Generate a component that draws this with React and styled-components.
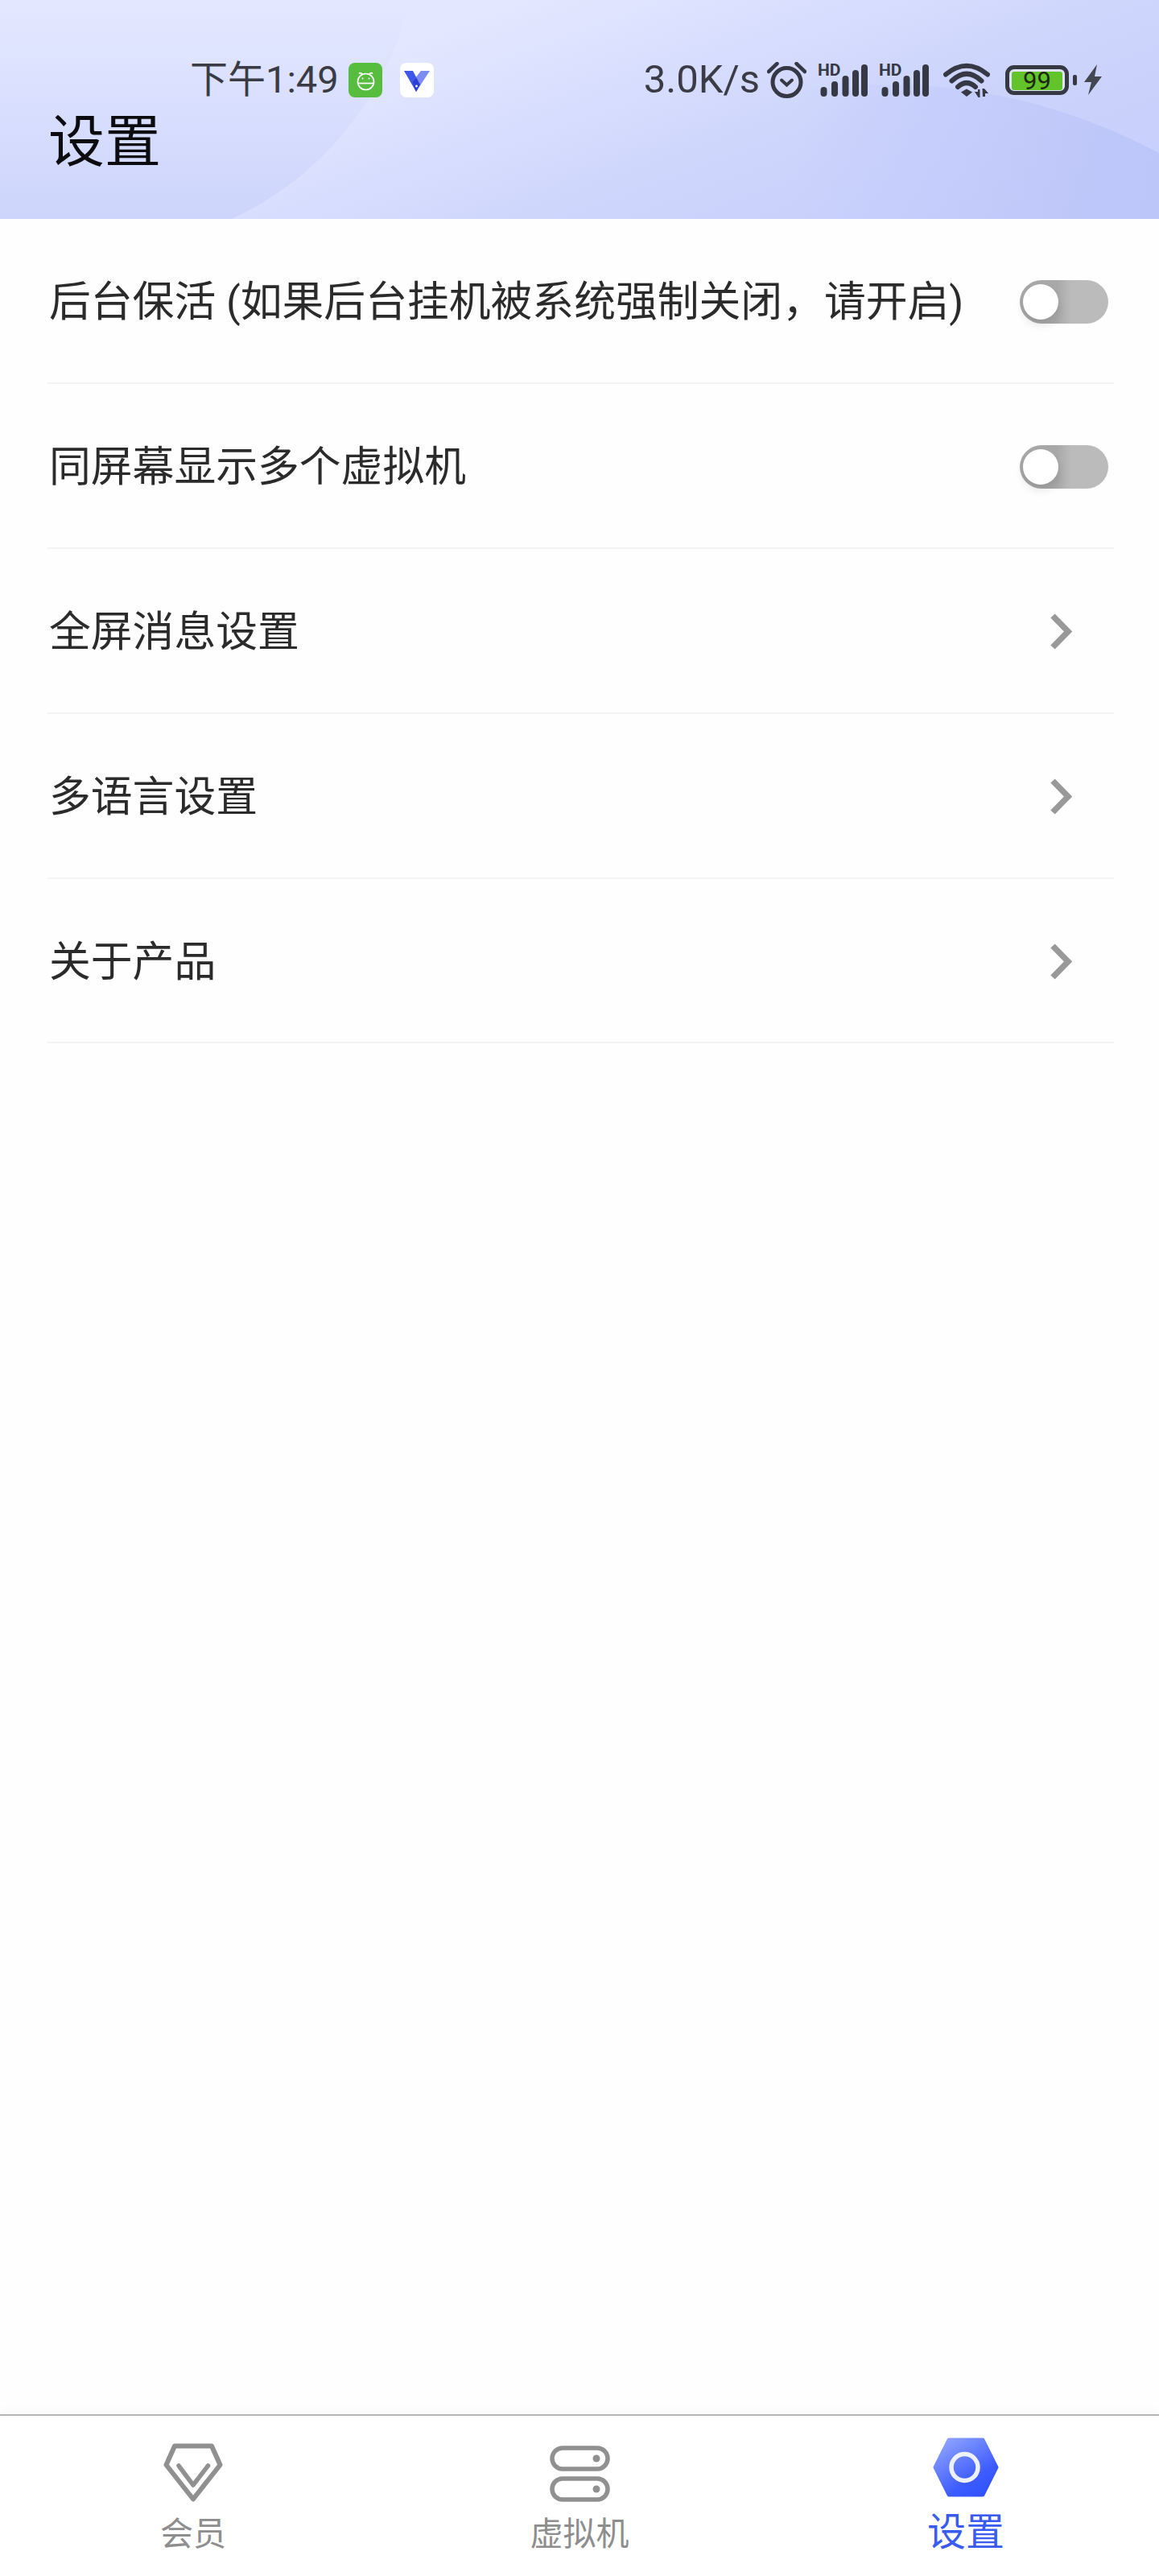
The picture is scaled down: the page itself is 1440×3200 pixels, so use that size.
import React from "react";
import styled, { createGlobalStyle } from "styled-components";

const GlobalStyle = createGlobalStyle`
  html, body { margin: 0; padding: 0; background: #fff; }
  * { box-sizing: border-box; }
  body { font-family: Roboto, "Noto Sans CJK SC", sans-serif; }
`;

const settings = [
  { label: "后台保活 (如果后台挂机被系统强制关闭，请开启)", kind: "toggle" },
  { label: "同屏幕显示多个虚拟机", kind: "toggle" },
  { label: "全屏消息设置", kind: "link" },
  { label: "多语言设置", kind: "link" },
  { label: "关于产品", kind: "link" },
];

const bars = [
  { x: 7.5, top: 33 },
  { x: 21, top: 26 },
  { x: 34.5, top: 19 },
  { x: 47, top: 12 },
  { x: 58, top: 5 },
];

function Signal() {
  return (
    <SignalBox>
      <HdMark>HD</HdMark>
      <svg width="62" height="41" viewBox="0 0 62 41">
        {bars.map((b) => (
          <line
            key={b.x}
            x1={b.x}
            x2={b.x}
            y1={b.top}
            y2="37"
            stroke="#363844"
            strokeWidth="8"
            strokeLinecap="round"
          />
        ))}
      </svg>
    </SignalBox>
  );
}

function Alarm() {
  return (
    <svg width="49" height="45" viewBox="0 0 49 45" fill="none" stroke="#363844" strokeLinecap="round">
      <circle cx="24.5" cy="25" r="17.5" strokeWidth="5" />
      <path d="M18 22.5l6.5 6 6.5-6" strokeWidth="4" />
      <path d="M2 12L12.5 2M36.5 2L47 12" strokeWidth="4.5" />
    </svg>
  );
}

function Wifi() {
  return (
    <svg width="58" height="44" viewBox="0 0 58 44" fill="none" stroke="#363844" strokeLinecap="round">
      <path d="M3 15.5Q29-6 55 15.5" strokeWidth="6" />
      <path d="M10.5 23.5Q29 6 47.5 23.5" strokeWidth="6" />
      <path d="M18 31Q29 21 40 31" strokeWidth="6" />
      <path d="M22 37.5L29 33.5L36 37.5L29 43Z" fill="#363844" stroke="none" />
      <path d="M39 37h4v-3h2.500v10h-2z" fill="#363844" stroke="none" />
      <path d="M48.500 33h2.500l5 6h-4v4h-3z" fill="#363844" stroke="none" />
    </svg>
  );
}

function Bolt() {
  return (
    <svg width="22" height="38" viewBox="0 0 22 38">
      <path d="M16 0L0 22h9L5 38 22 15h-9z" fill="#444650" />
    </svg>
  );
}

function RobotBadge() {
  return (
    <svg width="27" height="27" viewBox="0 0 27 27" fill="none" stroke="#fff" strokeWidth="1.7">
      <ellipse cx="13.5" cy="15.5" rx="10" ry="10" />
      <path d="M5 5.500a2.500 2.500 0 0 1 4 .5M22 5.500a2.500 2.500 0 0 0-4 .5" />
      <path d="M4 17.500h19" />
      <circle cx="9.500" cy="11.500" r="1" fill="#fff" stroke="none" />
      <circle cx="17.500" cy="11.500" r="1" fill="#fff" stroke="none" />
    </svg>
  );
}

function VBadge() {
  return (
    <svg width="42" height="43" viewBox="0 0 42 43">
      <path d="M5 10h11l9 17-5 9z" fill="#3f57e6" />
      <path d="M37 10H26L15 24l5 12z" fill="#7c8cf3" />
      <path d="M15 24l5-6 5 9-5 9z" fill="#2a3ed2" />
      <circle cx="20.500" cy="29" r="1.400" fill="#fff" />
    </svg>
  );
}

function Chevron() {
  return (
    <svg width="28" height="47" viewBox="0 0 28 47" fill="none">
      <path d="M4 4l19 19.500L4 43" stroke="#999999" strokeWidth="7.500" />
    </svg>
  );
}

function Diamond() {
  return (
    <svg width="74" height="73" viewBox="0 0 74 73" fill="none" stroke="#909090" strokeLinejoin="round" strokeLinecap="round">
      <path d="M14 3.500H60L70.500 27L37 69.500L3.500 27Z" strokeWidth="6" />
      <path d="M19 28L37 52L55.500 28" strokeWidth="5.500" />
    </svg>
  );
}

function Server() {
  return (
    <svg width="75" height="70" viewBox="0 0 75 70" fill="none" stroke="#909090">
      <rect x="3" y="3" width="69" height="26" rx="13" strokeWidth="5.500" />
      <rect x="3" y="41" width="69" height="26" rx="13" strokeWidth="5.500" />
      <circle cx="58" cy="16" r="4.500" fill="#909090" stroke="none" />
      <circle cx="58" cy="54" r="4.500" fill="#909090" stroke="none" />
    </svg>
  );
}

function Hex() {
  return (
    <svg width="82" height="74" viewBox="0 0 82 74">
      <defs>
        <linearGradient id="hexFill" x1="0.150" y1="0" x2="0.850" y2="1">
          <stop offset="0" stopColor="#8ea2ff" />
          <stop offset="0.700" stopColor="#3d5cff" />
          <stop offset="1" stopColor="#3050ff" />
        </linearGradient>
      </defs>
      <path
        d="M20 3H62L79 37L62 71H20L3 37Z"
        fill="url(#hexFill)"
        stroke="url(#hexFill)"
        strokeWidth="5"
        strokeLinejoin="round"
      />
      <circle cx="39.500" cy="37" r="16.500" fill="none" stroke="#eef1ff" strokeWidth="5.500" />
    </svg>
  );
}

function Toggle() {
  return (
    <Track>
      <Knob />
    </Track>
  );
}

const tabs = [
  { label: "会员", icon: <Diamond /> },
  { label: "虚拟机", icon: <Server /> },
  { label: "设置", icon: <Hex />, active: true },
];

export default function App() {
  return (
    <Page>
      <GlobalStyle />
      <Header>
        <StatusBar>
          <StatusLeft>
            <Clock>下午1:49</Clock>
            <GreenBadge>
              <RobotBadge />
            </GreenBadge>
            <WhiteBadge>
              <VBadge />
            </WhiteBadge>
          </StatusLeft>
          <StatusRight>
            <Speed>3.0K/s</Speed>
            <Alarm />
            <Signal />
            <Signal />
            <WifiSlot>
              <Wifi />
            </WifiSlot>
            <Battery>
              <BatteryFill>99</BatteryFill>
              <BatteryNub />
            </Battery>
            <Bolt />
          </StatusRight>
        </StatusBar>
        <Title>设置</Title>
      </Header>
      <List>
        {settings.map((item) => (
          <Row key={item.label}>
            <RowLabel>{item.label}</RowLabel>
            {item.kind === "toggle" ? (
              <Toggle />
            ) : (
              <ChevronSlot>
                <Chevron />
              </ChevronSlot>
            )}
          </Row>
        ))}
      </List>
      <TabBar>
        {tabs.map((tab) => (
          <Tab key={tab.label}>
            {tab.icon}
            <TabLabel $active={tab.active}>{tab.label}</TabLabel>
          </Tab>
        ))}
      </TabBar>
    </Page>
  );
}

const Page = styled.div`
  display: flex;
  flex-direction: column;
  width: 1440px;
  height: 3200px;
  background: #fefefe;
  overflow: hidden;
`;

const Header = styled.header`
  position: relative;
  height: 272px;
  padding-top: 76px;
  overflow: hidden;
  background: linear-gradient(160deg, #e3e7ff 30%, #cdd5fc 66%, #c5cdfb 100%);

  &::before {
    content: "";
    position: absolute;
    left: -280px;
    top: -491px;
    width: 800px;
    height: 800px;
    border-radius: 50%;
    background: linear-gradient(180deg, #e3e7ff 63%, #c9d2fb 100%);
  }

  &::after {
    content: "";
    position: absolute;
    left: 390px;
    top: 105px;
    width: 1424px;
    height: 1424px;
    border-radius: 50%;
    background: linear-gradient(90deg, rgba(188, 197, 248, 0) 42%, #bcc5f9 76%);
  }
`;

const StatusBar = styled.div`
  position: relative;
  z-index: 1;
  display: flex;
  align-items: center;
  justify-content: space-between;
  height: 46px;
  padding: 0 71px 0 236px;
`;

const StatusLeft = styled.div`
  display: flex;
  align-items: center;
`;

const Clock = styled.span`
  width: 197px;
  font-size: 47px;
  line-height: 46px;
  color: #3a3b45;
  white-space: nowrap;
`;

const GreenBadge = styled.div`
  display: flex;
  align-items: center;
  justify-content: center;
  width: 42px;
  height: 43px;
  border-radius: 8px;
  background: #56bd3f;
`;

const WhiteBadge = styled.div`
  width: 42px;
  height: 43px;
  margin-left: 22px;
  border-radius: 8px;
  background: #fff;
`;

const StatusRight = styled.div`
  display: flex;
  align-items: center;
  gap: 14px;
`;

const Speed = styled.span`
  font-size: 49px;
  line-height: 46px;
  color: #3a3b45;
  margin-right: -5px;
  white-space: nowrap;
`;

const SignalBox = styled.div`
  position: relative;
  display: flex;
  width: 62px;
  height: 41px;
`;

const HdMark = styled.span`
  position: absolute;
  left: 0;
  top: -2px;
  font-size: 21px;
  line-height: 21px;
  font-weight: 700;
  color: #363844;
`;

const WifiSlot = styled.div`
  display: flex;
  margin-left: 4px;
`;

const Battery = styled.div`
  position: relative;
  width: 79px;
  height: 37px;
  margin: 0 5px;
  padding: 3px;
  border: 5px solid #363844;
  border-radius: 11px;
  background: #dfe3f7;
`;

const BatteryFill = styled.div`
  display: flex;
  align-items: center;
  justify-content: center;
  width: 63px;
  height: 23px;
  border-radius: 3px;
  background: #62c32b;
  color: #1c2a14;
  font-size: 31px;
  line-height: 23px;
`;

const BatteryNub = styled.div`
  position: absolute;
  right: -15px;
  top: 7px;
  width: 5px;
  height: 13px;
  border-radius: 2px;
  background: #363844;
`;

const Title = styled.h1`
  position: relative;
  z-index: 1;
  margin: 0;
  padding: 10px 0 0 60px;
  font-size: 70px;
  line-height: 90px;
  font-weight: 400;
  color: #0c0c10;
`;

const List = styled.main`
  flex: 1;
  padding: 0 56px 0 59px;
`;

const Row = styled.div`
  display: flex;
  align-items: center;
  justify-content: space-between;
  height: 204.900px;
  padding: 3px 7px 0 2px;
  border-bottom: 2px solid #f3f3f3;
`;

const RowLabel = styled.span`
  padding-top: 2px;
  font-size: 51.8px;
  line-height: 60px;
  color: #2b2b2b;
  font-weight: 400;
  white-space: nowrap;
`;

const Track = styled.div`
  position: relative;
  width: 110px;
  height: 54px;
  border-radius: 27px;
  background: linear-gradient(90deg, #a8a8a8 0, #a8a8a8 42%, #bbbbbb 58%);
`;

const Knob = styled.div`
  position: absolute;
  left: 4px;
  top: 5px;
  width: 44px;
  height: 44px;
  border-radius: 50%;
  background: #fff;
  box-shadow: 0 7px 12px rgba(0, 0, 0, 0.1);
`;

const ChevronSlot = styled.div`
  display: flex;
  margin-right: 45px;
`;

const TabBar = styled.nav`
  display: grid;
  grid-template-columns: repeat(3, 480px);
  height: 201px;
  border-top: 2px solid #b5b5b5;
  background: #fff;
  box-shadow: 0 -8px 10px rgba(0, 0, 0, 0.015);
`;

const Tab = styled.div`
  display: flex;
  flex-direction: column;
  align-items: center;
  justify-content: flex-end;
  padding-bottom: 28px;
`;

const TabLabel = styled.span`
  margin-top: ${(p) => (p.$active ? "19px" : "16px")};
  margin-bottom: ${(p) => (p.$active ? "1px" : "0")};
  font-size: ${(p) => (p.$active ? "48px" : "41px")};
  line-height: ${(p) => (p.$active ? "50px" : "48px")};
  font-weight: 400;
  color: ${(p) => (p.$active ? "#3a5bef" : "#8e8e8e")};
`;
